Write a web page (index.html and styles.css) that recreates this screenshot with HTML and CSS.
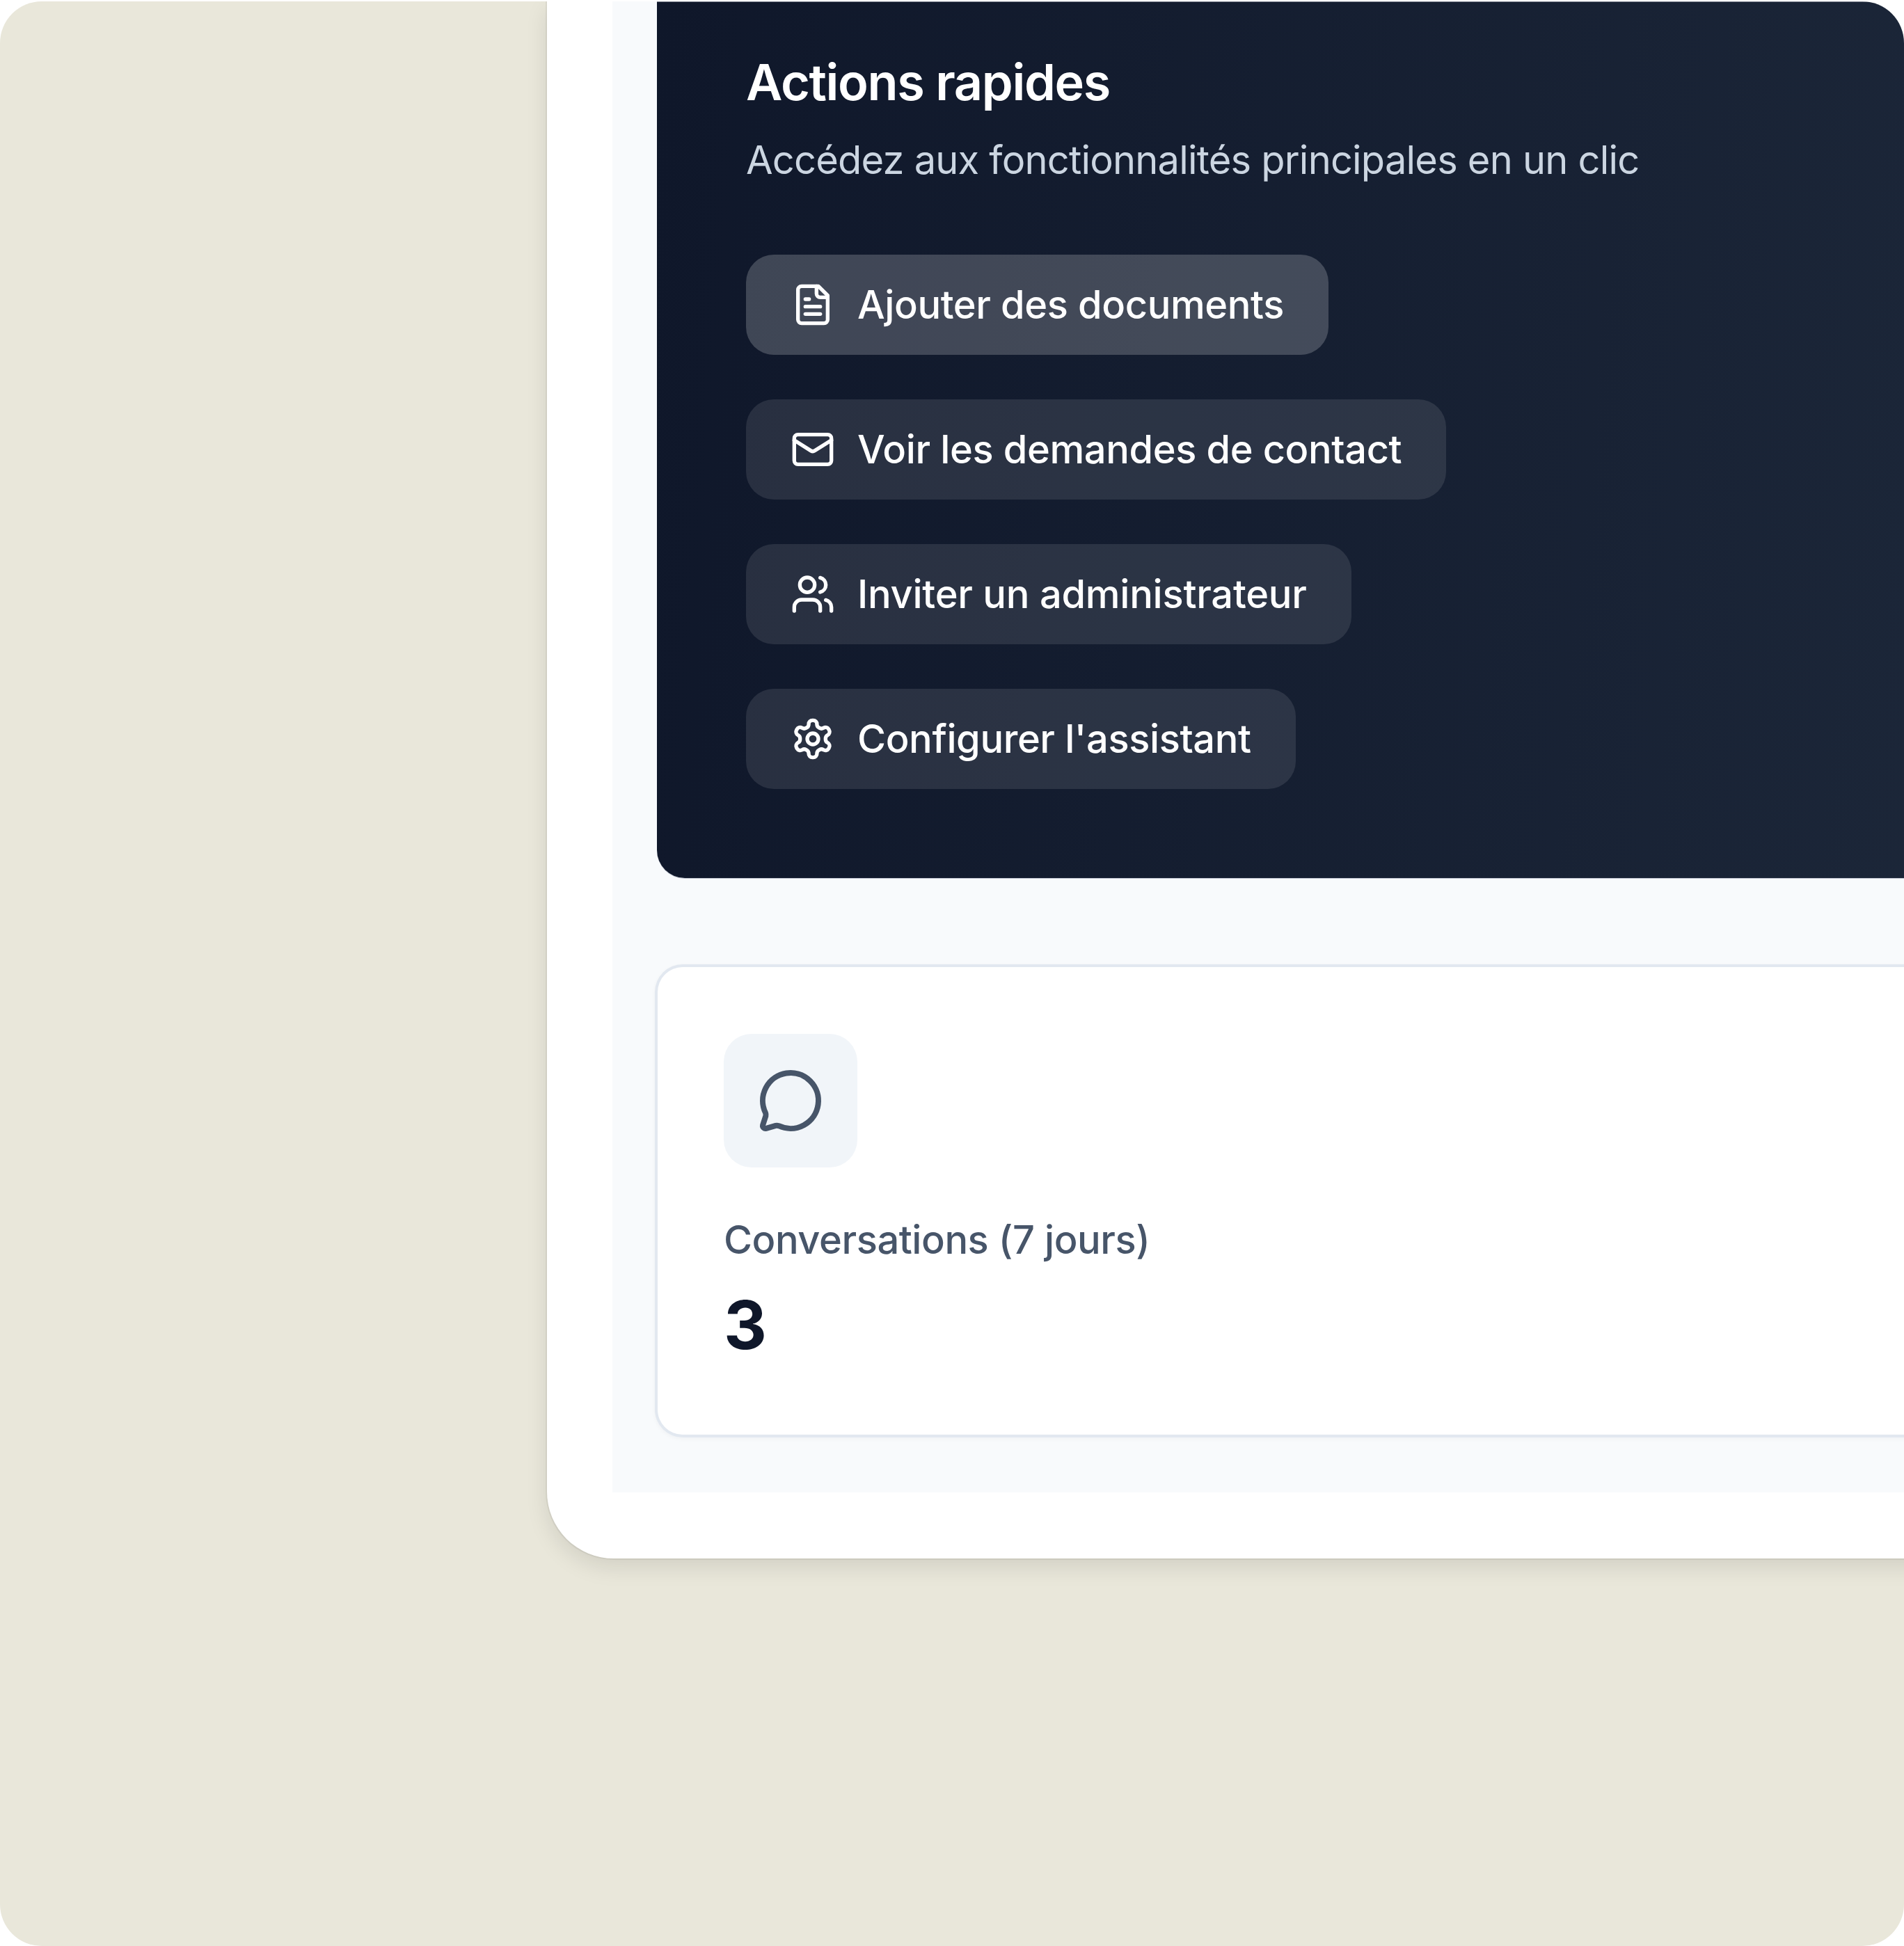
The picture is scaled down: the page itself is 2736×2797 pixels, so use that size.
FILE: index.html
```html
<!DOCTYPE html>
<html lang="fr">
<head>
    <meta charset="UTF-8">
    <meta name="viewport" content="width=device-width, initial-scale=1.0">
    <title>Tableau de bord</title>
    <link rel="stylesheet" href="styles.css">
</head>
<body>
    <div class="screen">
        <div class="window">
            <main class="panel">
                <section class="actions">
                    <h2>Actions rapides</h2>
                    <p>Accédez aux fonctionnalités principales en un clic</p>
                    <div class="action-list">
                        <a class="action action-hover" href="#">
                            <svg class="icon" viewBox="0 0 24 24">
                                <path d="M15 2H6a2 2 0 0 0-2 2v16a2 2 0 0 0 2 2h12a2 2 0 0 0 2-2V7Z"/>
                                <path d="M14 2v4a2 2 0 0 0 2 2h4"/>
                                <path d="M10 9H8"/>
                                <path d="M16 13H8"/>
                                <path d="M16 17H8"/>
                            </svg>
                            Ajouter des documents
                        </a>
                        <a class="action" href="#">
                            <svg class="icon" viewBox="0 0 24 24">
                                <rect width="20" height="16" x="2" y="4" rx="2"/>
                                <path d="m22 7-8.97 5.7a1.94 1.94 0 0 1-2.06 0L2 7"/>
                            </svg>
                            Voir les demandes de contact
                        </a>
                        <a class="action action-wide" href="#">
                            <svg class="icon" viewBox="0 0 24 24">
                                <path d="M16 21v-2a4 4 0 0 0-4-4H6a4 4 0 0 0-4 4v2"/>
                                <circle cx="9" cy="7" r="4"/>
                                <path d="M22 21v-2a4 4 0 0 0-3-3.87"/>
                                <path d="M16 3.13a4 4 0 0 1 0 7.75"/>
                            </svg>
                            Inviter un administrateur
                        </a>
                        <a class="action" href="#">
                            <svg class="icon" viewBox="0 0 24 24">
                                <path d="M12.22 2h-.44a2 2 0 0 0-2 2v.18a2 2 0 0 1-1 1.73l-.43.25a2 2 0 0 1-2 0l-.15-.08a2 2 0 0 0-2.73.73l-.22.38a2 2 0 0 0 .73 2.73l.15.1a2 2 0 0 1 1 1.72v.51a2 2 0 0 1-1 1.74l-.15.09a2 2 0 0 0-.73 2.73l.22.38a2 2 0 0 0 2.73.73l.15-.08a2 2 0 0 1 2 0l.43.25a2 2 0 0 1 1 1.73V20a2 2 0 0 0 2 2h.44a2 2 0 0 0 2-2v-.18a2 2 0 0 1 1-1.73l.43-.25a2 2 0 0 1 2 0l.15.08a2 2 0 0 0 2.73-.73l.22-.39a2 2 0 0 0-.73-2.73l-.15-.08a2 2 0 0 1-1-1.74v-.5a2 2 0 0 1 1-1.74l.15-.09a2 2 0 0 0 .73-2.73l-.22-.38a2 2 0 0 0-2.73-.73l-.15.08a2 2 0 0 1-2 0l-.43-.25a2 2 0 0 1-1-1.73V4a2 2 0 0 0-2-2z"/>
                                <circle cx="12" cy="12" r="3"/>
                            </svg>
                            Configurer l'assistant
                        </a>
                    </div>
                </section>

                <section class="stat-card">
                    <div class="stat-icon">
                        <svg viewBox="0 0 24 24">
                            <path d="M2.992 16.342a2 2 0 0 1 .094 1.167l-1.065 3.29a1 1 0 0 0 1.236 1.168l3.413-.998a2 2 0 0 1 1.099.092 10 10 0 1 0-4.777-4.719"/>
                        </svg>
                    </div>
                    <div class="stat-label">Conversations (7 jours)</div>
                    <div class="stat-value">3</div>
                </section>
            </main>
        </div>
    </div>
</body>
</html>
```

FILE: styles.css
```css
* {
    box-sizing: border-box;
}

html, body {
    margin: 0;
    background: #fff;
}

body {
    font-family: 'Inter', sans-serif;
    padding-top: 2px;
}

.screen {
    height: 2795px;
    background: #e9e7da;
    border-radius: 60px;
    overflow: hidden;
    padding-left: 786px;
}

.window {
    width: 2200px;
    height: 2238px;
    background: #fff;
    border-radius: 0 0 0 96px;
    padding: 0 0 95px 94px;
    box-shadow: 0 0 0 2px rgba(0, 0, 0, 0.05), 0 12px 32px rgba(0, 0, 0, 0.1);
}

.panel {
    height: 100%;
    background: #f8fafc;
    padding-left: 64px;
    display: flex;
    flex-direction: column;
    gap: 124px;
}

.actions {
    height: 1260px;
    background: linear-gradient(95deg, #0f172a, #1d283a);
    border-top: 1px solid #7d828f;
    border-radius: 0 0 0 40px;
    padding: 75px 128px 0;
    color: #fff;
    box-shadow: 0 1px 0 #c4c8d4;
}

.actions h2 {
    margin: 0;
    font-size: 72px;
    line-height: 80px;
    font-weight: 600;
    letter-spacing: -1.35px;
}

.actions p {
    margin: 32px 0 0;
    font-size: 56px;
    line-height: 80px;
    letter-spacing: -0.8px;
    color: #cbd5e1;
}

.action-list {
    margin-top: 96px;
    display: flex;
    flex-direction: column;
    align-items: flex-start;
    gap: 64px;
}

.action {
    height: 144px;
    padding: 0 64px;
    display: flex;
    align-items: center;
    gap: 32px;
    font-size: 56px;
    font-weight: 500;
    letter-spacing: -0.4px;
    color: #fff;
    text-decoration: none;
    border-radius: 40px;
    background: rgba(255, 255, 255, 0.1);
}

.action-hover {
    background: rgba(255, 255, 255, 0.2);
}

.action-wide {
    letter-spacing: -0.25px;
}

.icon {
    width: 64px;
    height: 64px;
    flex: none;
    fill: none;
    stroke: #fff;
    stroke-width: 2;
    stroke-linecap: round;
    stroke-linejoin: round;
}

.stat-card {
    height: 680px;
    background: #fff;
    border: 4px solid #e2e8f0;
    border-right: 0;
    border-radius: 40px 0 0 40px;
    margin-left: -3px;
    padding: 96px 96px 96px 95px;
    box-shadow: 0 2px 6px rgba(15, 23, 42, 0.04);
}

.stat-icon {
    width: 192px;
    height: 192px;
    border-radius: 40px;
    background: #f1f5f9;
    display: flex;
    align-items: center;
    justify-content: center;
}

.stat-icon svg {
    width: 96px;
    height: 96px;
    fill: none;
    stroke: #475569;
    stroke-width: 2;
    stroke-linecap: round;
    stroke-linejoin: round;
}

.stat-label {
    margin-top: 64px;
    font-size: 56px;
    line-height: 80px;
    font-weight: 500;
    letter-spacing: -0.45px;
    color: #475569;
}

.stat-value {
    margin-top: 22px;
    font-size: 96px;
    line-height: 120px;
    font-weight: 700;
    color: #0f172a;
}
```
